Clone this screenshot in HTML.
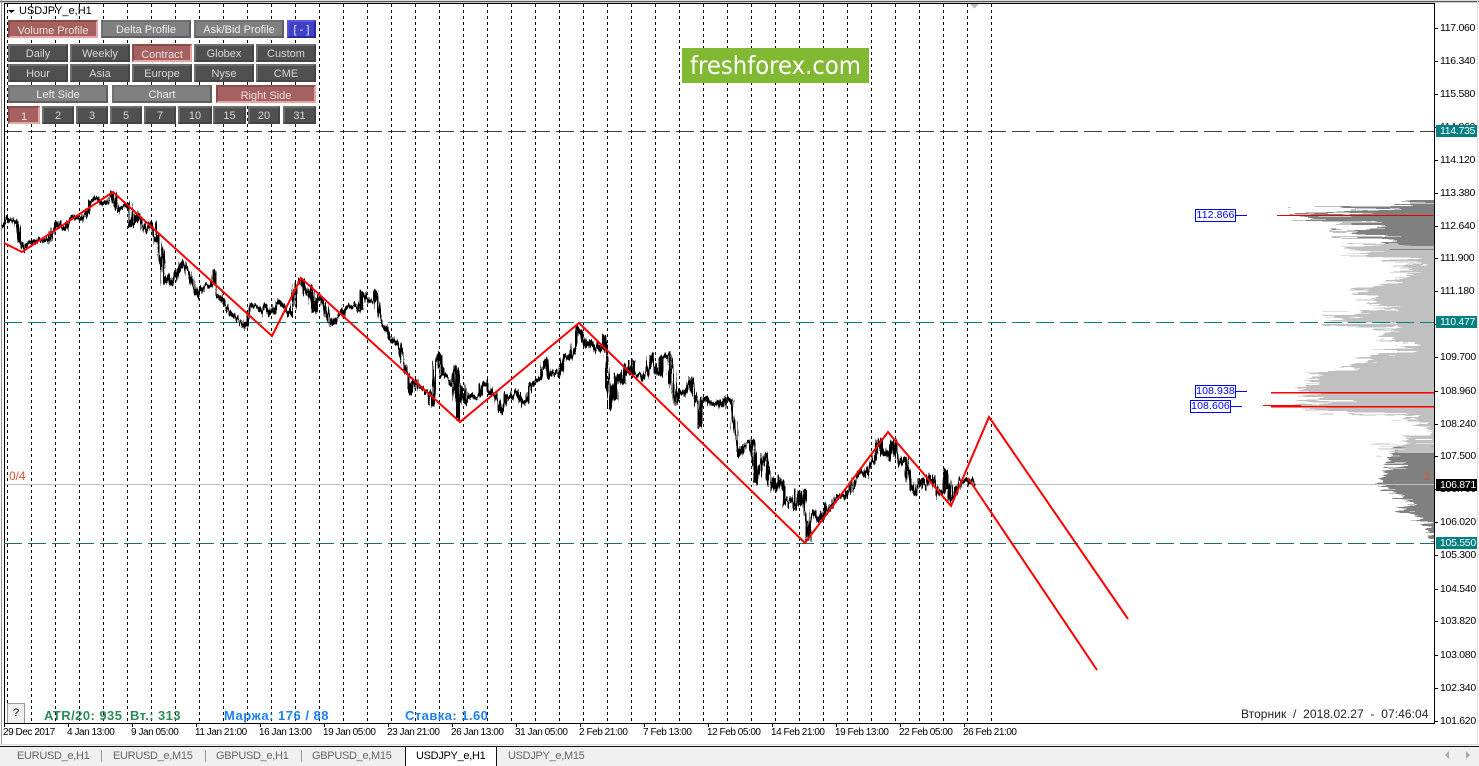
<!DOCTYPE html>
<html><head><meta charset="utf-8"><style>
html,body{margin:0;padding:0;background:#fff;width:1479px;height:766px;overflow:hidden}
body{position:relative;font-family:"Liberation Sans",sans-serif}
svg{position:absolute;left:0;top:0}
svg text{font-family:"Liberation Sans",sans-serif}
.b{position:absolute;box-sizing:border-box;height:18px;line-height:16px;text-align:center;font-size:11px;border:2px solid;white-space:nowrap;overflow:hidden}
.d{background:#505050;color:#d8d8d8;border-color:#6e6e6e #444 #444 #6e6e6e}
.g{background:#808080;color:#eee;border-color:#707070 #5e5e5e #5e5e5e #707070}
.r{background:#a56060;color:#f0e0e0;border-color:#8c4c4c #e5a5a5 #e5a5a5 #8c4c4c;line-height:18px}
.u{background:#4040c8;color:#e8e8ff;border-color:#5555dd #2a2a99 #2a2a99 #5555dd}
.t{position:absolute;white-space:nowrap}
.ax{position:absolute;left:1440px;font-size:10.5px;letter-spacing:-.3px;line-height:13px;color:#000;white-space:nowrap}
.bd{position:absolute;left:1436px;width:41px;height:12px;line-height:12px;font-size:10.5px;letter-spacing:-.3px;color:#fff;text-align:left;padding-left:4px;box-sizing:border-box}
.x{position:absolute;top:726px;font-size:10px;letter-spacing:-.45px;line-height:13px;color:#000;white-space:nowrap}
.tab{position:absolute;top:749px;font-size:11px;letter-spacing:-.3px;line-height:14px;color:#666;white-space:nowrap}
.sep{position:absolute;top:750px;width:1px;height:12px;background:#999}
.lb{position:absolute;box-sizing:border-box;width:41px;height:13px;border:1px solid #00f;color:#00f;font-size:10.5px;letter-spacing:.1px;line-height:11px;text-align:center;background:#fff}
</style></head><body>
<svg width="1479" height="766" viewBox="0 0 1479 766">
<defs>
<filter id="n" filterUnits="userSpaceOnUse" x="0" y="0" width="1479" height="766" color-interpolation-filters="sRGB">
<feTurbulence type="fractalNoise" baseFrequency="0.5 0.03" numOctaves="2" seed="7" result="t"/>
<feDisplacementMap in="SourceGraphic" in2="t" scale="11" xChannelSelector="A" yChannelSelector="G"/>
</filter>
<filter id="v" filterUnits="userSpaceOnUse" x="1200" y="190" width="279" height="370" color-interpolation-filters="sRGB">
<feTurbulence type="fractalNoise" baseFrequency="0.01 0.45" numOctaves="2" seed="3" result="t"/>
<feDisplacementMap in="SourceGraphic" in2="t" scale="26" xChannelSelector="R" yChannelSelector="A"/>
</filter>
<clipPath id="vc"><rect x="1200" y="200" width="234" height="344"/></clipPath>
</defs>
<rect x="0" y="0" width="1479" height="1" fill="#ddd"/>
<rect x="0" y="1" width="1479" height="1" fill="#555"/>
<rect x="0" y="2" width="1479" height="1" fill="#ccc"/>
<rect x="4" y="3" width="1431" height="1" fill="#000"/>
<rect x="1" y="0" width="1" height="746" fill="#999"/>
<rect x="4" y="3" width="1" height="721" fill="#000"/>
<rect x="1434" y="3" width="1" height="721" fill="#000"/>
<rect x="4" y="723" width="1431" height="1" fill="#000"/>
<rect x="1477" y="0" width="1" height="745" fill="#ddd"/>
<rect x="0" y="744" width="1479" height="1" fill="#ddd"/>
<rect x="0" y="745" width="1479" height="21" fill="#f0f0f0"/>
<rect x="0" y="746" width="1479" height="1" fill="#111"/>

<path shape-rendering="crispEdges" stroke="#000" stroke-width="1" stroke-dasharray="3 3" fill="none" d="M7.5 4V723M31.5 4V723M55.5 4V723M79.5 4V723M103.5 4V723M127.5 4V723M151.5 4V723M175.5 4V723M199.5 4V723M223.5 4V723M247.5 4V723M271.5 4V723M295.5 4V723M319.5 4V723M343.5 4V723M367.5 4V723M391.5 4V723M415.5 4V723M439.5 4V723M463.5 4V723M487.5 4V723M511.5 4V723M535.5 4V723M559.5 4V723M583.5 4V723M607.5 4V723M631.5 4V723M655.5 4V723M679.5 4V723M703.5 4V723M727.5 4V723M751.5 4V723M775.5 4V723M799.5 4V723M823.5 4V723M847.5 4V723M871.5 4V723M895.5 4V723M919.5 4V723M943.5 4V723M967.5 4V723M991.5 4V723"/>
<polygon points="970,4 979,4 974.5,8.5" fill="#bbb"/>

<g clip-path="url(#vc)"><g filter="url(#v)">
<polygon shape-rendering="crispEdges" fill="#808080" points="1450,200 1425,200 1425,202 1410,202 1410,204 1395,204 1395,206 1375,206 1375,207 1345,207 1345,209 1362,209 1362,211 1347,211 1347,213 1291,213 1291,216 1308,216 1308,218 1360,218 1360,220 1372,220 1372,223 1385,223 1385,225 1329,225 1329,227 1337,227 1337,229 1345,229 1345,231 1357,231 1357,234 1332,234 1332,236 1357,236 1357,238 1382,238 1382,241 1397,241 1397,244 1385,244 1385,246 1450,246"/>
<polygon shape-rendering="crispEdges" fill="#c0c0c0" points="1450,246 1365,246 1365,247 1350,247 1350,249 1342,249 1342,251 1367,251 1367,254 1380,254 1380,257 1393,257 1393,259 1410,259 1410,262 1422,262 1422,265 1393,265 1393,267 1400,267 1400,270 1415,270 1415,273 1410,273 1410,275 1405,275 1405,278 1397,278 1397,281 1385,281 1385,284 1367,284 1367,287 1355,287 1355,289 1352,289 1352,292 1357,292 1357,296 1373,296 1373,300 1378,300 1378,303 1370,303 1370,306 1385,306 1385,309 1397,309 1397,311 1375,311 1375,313 1360,313 1360,316 1333,316 1333,318 1322,318 1322,320 1313,320 1313,322 1343,322 1343,325 1397,325 1397,328 1377,328 1377,333 1383,333 1383,337 1395,337 1395,342 1403,342 1403,345 1415,345 1415,349 1397,349 1397,353 1373,353 1373,358 1363,358 1363,363 1355,363 1355,368 1340,368 1340,373 1305,373 1305,376 1315,376 1315,380 1320,380 1320,384 1307,384 1307,388 1298,388 1298,393 1307,393 1307,396 1320,396 1320,400 1325,400 1325,402 1297,402 1297,406 1300,406 1300,408 1353,408 1353,411 1387,411 1387,415 1407,415 1407,420 1420,420 1420,426 1428,426 1428,432 1432,432 1432,436 1407,436 1407,440 1405,440 1405,445 1377,445 1377,448 1392,448 1392,452 1450,452"/>
<polygon shape-rendering="crispEdges" fill="#808080" points="1450,452 1393,452 1393,455 1390,455 1390,460 1388,460 1388,465 1405,465 1405,467 1388,467 1388,471 1383,471 1383,476 1380,476 1380,487 1385,487 1385,491 1397,491 1397,495 1403,495 1403,500 1413,500 1413,504 1408,504 1408,509 1400,509 1400,514 1418,514 1418,519 1423,519 1423,525 1427,525 1427,531 1430,531 1430,537 1432,537 1432,543 1450,543"/>
</g></g>

<path shape-rendering="crispEdges" stroke="#000" stroke-width="1" stroke-dasharray="18 6" fill="none" opacity=".75" d="M4 131.5H1434"/>
<path shape-rendering="crispEdges" stroke="#008080" stroke-width="1" stroke-dasharray="18 6" fill="none" d="M4 322.5H1434"/>
<path shape-rendering="crispEdges" stroke="#1f6f6f" stroke-width="1" stroke-dasharray="18 6" fill="none" d="M4 543.5H1434"/>
<rect x="5" y="484" width="1429" height="1" fill="#c0c0c0"/>

<rect x="1277" y="215" width="157" height="1" fill="#e00000"/>
<rect x="1271" y="392" width="163" height="1.5" fill="#f00"/>
<rect x="1263" y="405" width="12" height="1" fill="#f00"/>
<rect x="1271" y="406" width="163" height="1.5" fill="#f00"/>
<rect x="1271" y="405" width="30" height="2" fill="#f00"/>
<rect x="1236" y="215" width="11" height="1" fill="#00f"/>
<rect x="1236" y="391" width="11" height="1" fill="#00f"/>
<rect x="1231" y="406" width="11" height="1" fill="#00f"/>

<g fill="none" stroke="#000" stroke-linejoin="miter" stroke-miterlimit="2" filter="url(#n)">
<polyline stroke-width="3.6" points="4,226 7,222 10,219 12,220 17,222 18,228 19,240 22,246 24,250 27,244 32,241 36,243 40,239 47,241 50,237 53,230 57,222 60,227 65,229 70,218 75,216 82,220 86,215 90,202 95,198 100,201 104,204 110,200 113,192 115,202 119,212 122,208 127,206 129,202 130,215 131,228 135,222 138,213 143,226 146,232 150,225 153,222 154,240 158,238 160,250 162,262 164,285 168,275 172,285 176,275 183,262 190,275 195,290 198,295 205,285 212,285 214,270 217,295 222,300 230,312 236,317 240,320 245,327 251,305 258,307 262,312 265,305 270,315 276,308 278,300 285,308 291,315 293,300 297,285 300,280 302,280 305,295 310,288 313,305 315,312 318,295 322,300 328,315 331,325 335,320 340,315 345,308 355,305 360,312 362,290 368,302 373,300 376,290 378,310 382,322 385,325 390,338 395,345 397,340 402,355 405,370 408,375 410,385 412,395 415,380 420,388 425,390 430,395 433,405 436,360 440,355 442,375 447,380 452,385 455,365 456,395 458,405 459,420 461,385 465,403 470,395 475,398 480,395 482,385 487,380 490,393 495,395 500,405 503,412 506,395 512,398 517,390 522,405 527,400 530,385 535,380 540,378 545,360 550,375 555,372 560,375 565,355 570,358 575,345 577,325 582,335 586,345 590,342 595,352 598,345 602,350 604,335 606,355 608,385 610,410 612,385 616,400 618,375 622,385 625,365 628,375 632,360 635,375 640,375 643,380 650,365 652,355 656,372 660,375 662,358 668,355 671,368 674,390 676,405 680,390 685,395 690,378 695,395 698,415 700,428 702,400 705,398 712,405 718,402 722,408 726,398 732,402 734,420 737,445 740,455 745,445 752,441 755,465 757,485 760,470 763,455 766,452 768,470 772,490 775,478 778,490 782,480 785,505 790,498 795,510 798,490 800,505 803,490 805,512 808,540 811,520 815,510 820,520 825,505 830,510 835,500 840,495 845,497 850,490 855,480 860,470 865,475 870,465 875,460 877,445 880,440 884,455 887,450 890,460 893,445 895,440 897,455 900,465 905,455 908,475 912,490 916,495 920,480 925,490 930,475 935,485 940,495 945,490 945,470 950,500 955,495 960,480 963,480 968,478 972,483 975,485"/>
</g>

<g fill="none" stroke="#f00" stroke-width="2">
<polyline points="4,243 22,252 113,192 272,336 301,278 460,422 579,323 805,543 888,432 951,506 989,417 1128,619"/>
<polyline points="968,478 1097,670"/>
</g>

<rect x="682" y="48" width="187" height="35" fill="#82b933"/>
<text x="690" y="74" fill="#fff" font-size="25" textLength="171" lengthAdjust="spacingAndGlyphs" style='font-family:"DejaVu Sans",sans-serif'>freshforex.com</text>

<polygon points="8,10 15,10 11.5,13" fill="#000"/>
<path stroke="#000" fill="none" shape-rendering="crispEdges" d="M4.5 724V727M68.5 724V727M132.5 724V727M196.5 724V727M260.5 724V727M324.5 724V727M388.5 724V727M452.5 724V727M516.5 724V727M580.5 724V727M644.5 724V727M708.5 724V727M772.5 724V727M836.5 724V727M900.5 724V727M964.5 724V727"/>
<path stroke="#000" fill="none" shape-rendering="crispEdges" d="M1435 28.5H1438M1435 61.5H1438M1435 94.5H1438M1435 127.5H1438M1435 160.5H1438M1435 193.5H1438M1435 226.5H1438M1435 258.5H1438M1435 291.5H1438M1435 324.5H1438M1435 357.5H1438M1435 391.5H1438M1435 424.5H1438M1435 456.5H1438M1435 489.5H1438M1435 522.5H1438M1435 555.5H1438M1435 589.5H1438M1435 621.5H1438M1435 655.5H1438M1435 688.5H1438M1435 721.5H1438"/>
<polygon points="1445,755 1449,751 1449,759" fill="#aaa"/>
<polygon points="1470,755 1466,751 1466,759" fill="#aaa"/>
</svg>

<div class="t" style="left:19px;top:5px;font-size:11px;line-height:13px;color:#000">USDJPY_e,H1</div>

<div class="b r" style="left:8px;top:20px;width:90px">Volume Profile</div>
<div class="b g" style="left:101px;top:20px;width:90px">Delta Profile</div>
<div class="b g" style="left:194px;top:20px;width:90px">Ask/Bid Profile</div>
<div class="b u" style="left:287px;top:20px;width:29px">[ - ]</div>

<div class="b d" style="left:8px;top:44px;width:60px">Daily</div>
<div class="b d" style="left:70px;top:44px;width:60px">Weekly</div>
<div class="b r" style="left:132px;top:44px;width:60px">Contract</div>
<div class="b d" style="left:194px;top:44px;width:60px">Globex</div>
<div class="b d" style="left:256px;top:44px;width:60px">Custom</div>

<div class="b d" style="left:8px;top:64px;width:60px">Hour</div>
<div class="b d" style="left:70px;top:64px;width:60px">Asia</div>
<div class="b d" style="left:132px;top:64px;width:60px">Europe</div>
<div class="b d" style="left:194px;top:64px;width:60px">Nyse</div>
<div class="b d" style="left:256px;top:64px;width:60px">CME</div>

<div class="b g" style="left:8px;top:85px;width:100px">Left Side</div>
<div class="b g" style="left:112px;top:85px;width:100px">Chart</div>
<div class="b r" style="left:216px;top:85px;width:100px">Right Side</div>

<div class="b r" style="left:8px;top:106px;width:32px">1</div>
<div class="b d" style="left:42px;top:106px;width:32px">2</div>
<div class="b d" style="left:76px;top:106px;width:32px">3</div>
<div class="b d" style="left:110px;top:106px;width:32px">5</div>
<div class="b d" style="left:144px;top:106px;width:32px">7</div>
<div class="b d" style="left:178px;top:106px;width:34px">10</div>
<div class="b d" style="left:213px;top:106px;width:33px">15</div>
<div class="b d" style="left:248px;top:106px;width:32px">20</div>
<div class="b d" style="left:283px;top:106px;width:33px">31</div>

<div class="ax" style="top:22px">117.060</div>
<div class="ax" style="top:55px">116.340</div>
<div class="ax" style="top:88px">115.580</div>
<div class="ax" style="top:121px">114.860</div>
<div class="ax" style="top:154px">114.120</div>
<div class="ax" style="top:187px">113.380</div>
<div class="ax" style="top:220px">112.640</div>
<div class="ax" style="top:252px">111.900</div>
<div class="ax" style="top:285px">111.180</div>
<div class="ax" style="top:318px">110.440</div>
<div class="ax" style="top:351px">109.700</div>
<div class="ax" style="top:385px">108.960</div>
<div class="ax" style="top:418px">108.240</div>
<div class="ax" style="top:450px">107.500</div>
<div class="ax" style="top:483px">106.760</div>
<div class="ax" style="top:516px">106.020</div>
<div class="ax" style="top:549px">105.300</div>
<div class="ax" style="top:583px">104.540</div>
<div class="ax" style="top:615px">103.820</div>
<div class="ax" style="top:649px">103.080</div>
<div class="ax" style="top:682px">102.340</div>
<div class="ax" style="top:715px">101.620</div>

<div class="bd" style="top:125px;background:#008080">114.735</div>
<div class="bd" style="top:316px;background:#008080">110.477</div>
<div class="bd" style="top:479px;background:#000">106.871</div>
<div class="bd" style="top:537px;background:#008080">105.550</div>

<div class="lb" style="left:1195px;top:209px">112.866</div>
<div class="lb" style="left:1195px;top:385px">108.938</div>
<div class="lb" style="left:1190px;top:400px">108.606</div>

<div class="t" style="left:9px;top:469px;font-size:12px;line-height:14px;color:#e05030">0/4</div>
<div class="t" style="left:1424px;top:469px;font-size:12px;line-height:14px;color:#e05030">1</div>

<div style="position:absolute;left:7px;top:703px;width:18px;height:20px;box-sizing:border-box;background:#f0f0f0;border:1px solid #999;border-bottom:none;text-align:center;font-size:11px;line-height:18px;color:#000">?</div>
<div class="t" style="left:44px;top:708px;font-size:13px;line-height:15px;font-weight:bold;color:#2e8b57;letter-spacing:.45px">ATR/20: 935</div>
<div class="t" style="left:130px;top:708px;font-size:13px;line-height:15px;font-weight:bold;color:#2e8b57;letter-spacing:.4px">Вт.: 313</div>
<div class="t" style="left:224px;top:708px;font-size:13px;line-height:15px;font-weight:bold;color:#1e80f0;letter-spacing:.5px">Маржа: 176 / 88</div>
<div class="t" style="left:405px;top:708px;font-size:13px;line-height:15px;font-weight:bold;color:#1e80f0;letter-spacing:.45px">Ставка: 1.60</div>
<div class="t" style="left:1241px;top:707px;font-size:12px;line-height:14px;color:#222;letter-spacing:.05px">Вторник &nbsp;/ &nbsp;2018.02.27 &nbsp;- &nbsp;07:46:04</div>

<div class="x" style="left:3px">29 Dec 2017</div>
<div class="x" style="left:67px">4 Jan 13:00</div>
<div class="x" style="left:131px">9 Jan 05:00</div>
<div class="x" style="left:195px">11 Jan 21:00</div>
<div class="x" style="left:259px">16 Jan 13:00</div>
<div class="x" style="left:323px">19 Jan 05:00</div>
<div class="x" style="left:387px">23 Jan 21:00</div>
<div class="x" style="left:451px">26 Jan 13:00</div>
<div class="x" style="left:515px">31 Jan 05:00</div>
<div class="x" style="left:579px">2 Feb 21:00</div>
<div class="x" style="left:643px">7 Feb 13:00</div>
<div class="x" style="left:707px">12 Feb 05:00</div>
<div class="x" style="left:771px">14 Feb 21:00</div>
<div class="x" style="left:835px">19 Feb 13:00</div>
<div class="x" style="left:899px">22 Feb 05:00</div>
<div class="x" style="left:963px">26 Feb 21:00</div>

<div style="position:absolute;left:405px;top:746px;width:92px;height:20px;box-sizing:border-box;background:#fff;border:1px solid #111;border-bottom:none"></div>
<div class="tab" style="left:17px">EURUSD_e,H1</div><div class="sep" style="left:101px"></div>
<div class="tab" style="left:113px">EURUSD_e,M15</div><div class="sep" style="left:205px"></div>
<div class="tab" style="left:216px">GBPUSD_e,H1</div><div class="sep" style="left:301px"></div>
<div class="tab" style="left:312px">GBPUSD_e,M15</div>
<div class="tab" style="left:416px;color:#000">USDJPY_e,H1</div>
<div class="tab" style="left:508px">USDJPY_e,M15</div>
</body></html>
